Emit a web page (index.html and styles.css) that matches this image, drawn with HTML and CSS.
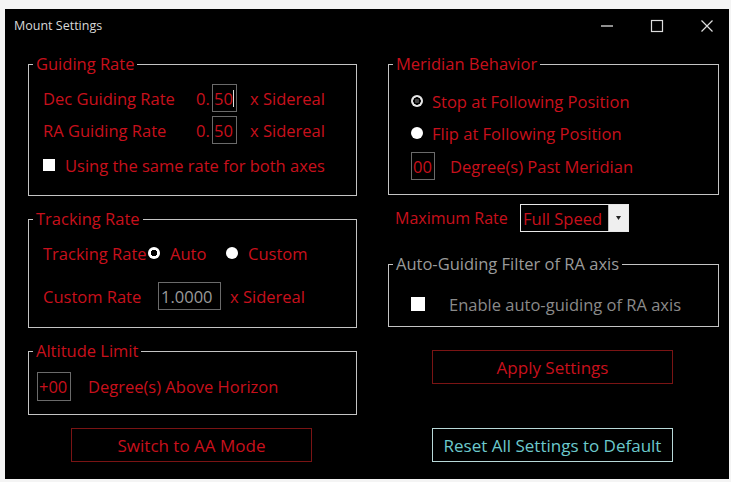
FILE: index.html
```html
<!DOCTYPE html>
<html>
<head>
<meta charset="utf-8">
<link rel="stylesheet" href="styles.css">
</head>
<body>
<div class="window">
  <div class="titlebar">
    <span class="title">Mount Settings</span>
    <div class="controls">
      <svg class="ctl" width="14" height="14" viewBox="0 0 14 14"><line x1="1" y1="7" x2="13" y2="7" stroke="#ddd" stroke-width="1.3"/></svg>
      <svg class="ctl" width="14" height="14" viewBox="0 0 14 14"><rect x="1.5" y="1.5" width="11" height="11" fill="none" stroke="#ddd" stroke-width="1.2"/></svg>
      <svg class="ctl" width="14" height="14" viewBox="0 0 14 14"><path d="M1.5 1.5 L12.5 12.5 M12.5 1.5 L1.5 12.5" stroke="#ddd" stroke-width="1.2"/></svg>
    </div>
  </div>
  <div class="content">
    <div class="col">
      <fieldset class="group g-guiding">
        <legend>Guiding Rate</legend>
        <div class="inner pad-guiding">
          <div class="row r-first">
            <span class="lbl w-guide">Dec Guiding Rate</span>
            <span class="zero">0.</span>
            <span class="tbox w-rate">50<i class="caret"></i></span>
            <span class="unit">x Sidereal</span>
          </div>
          <div class="row">
            <span class="lbl w-guide">RA Guiding Rate</span>
            <span class="zero">0.</span>
            <span class="tbox w-rate">50</span>
            <span class="unit">x Sidereal</span>
          </div>
          <div class="row r-check">
            <span class="check"></span>
            <span class="lbl">Using the same rate for both axes</span>
          </div>
        </div>
      </fieldset>

      <fieldset class="group g-tracking">
        <legend>Tracking Rate</legend>
        <div class="inner pad-tracking">
          <div class="row">
            <span class="lbl w-track">Tracking Rate</span>
            <span class="radio on"></span>
            <span class="lbl w-auto">Auto</span>
            <span class="radio"></span>
            <span class="lbl opt">Custom</span>
          </div>
          <div class="row r-custom">
            <span class="lbl w-custom">Custom Rate</span>
            <span class="tbox w-crate grey">1.0000</span>
            <span class="unit2">x Sidereal</span>
          </div>
        </div>
      </fieldset>

      <fieldset class="group g-alt">
        <legend>Altitude Limit</legend>
        <div class="inner pad-alt">
          <div class="row">
            <span class="tbox w-alt">+00</span>
            <span class="lbl deg">Degree(s) Above Horizon</span>
          </div>
        </div>
      </fieldset>

      <button class="btn btn-red b-switch">Switch to AA Mode</button>
    </div>

    <div class="col">
      <fieldset class="group g-meridian">
        <legend>Meridian Behavior</legend>
        <div class="inner pad-meridian">
          <div class="row">
            <span class="radio on2"></span>
            <span class="lbl opt2">Stop at Following Position</span>
          </div>
          <div class="row r-m2">
            <span class="radio"></span>
            <span class="lbl opt2">Flip at Following Position</span>
          </div>
          <div class="row r-m3">
            <span class="tbox w-mer">00</span>
            <span class="lbl deg2">Degree(s) Past Meridian</span>
          </div>
        </div>
      </fieldset>

      <div class="maxrate">
        <span class="lbl w-max">Maximum Rate</span>
        <div class="select">
          <span class="sel-val">Full Speed</span>
          <span class="sel-btn"><svg width="5" height="4" viewBox="0 0 5 4"><path d="M0 0 H5 L2.5 4 Z" fill="#222"/></svg></span>
        </div>
      </div>

      <fieldset class="group g-auto">
        <legend class="grey-legend">Auto-Guiding Filter of RA axis</legend>
        <div class="inner pad-auto">
          <div class="row">
            <span class="check big"></span>
            <span class="lbl greytext">Enable auto-guiding of RA axis</span>
          </div>
        </div>
      </fieldset>

      <button class="btn btn-red b-apply">Apply Settings</button>
      <button class="btn btn-teal b-reset">Reset All Settings to Default</button>
    </div>
  </div>
</div>
</body>
</html>
```

FILE: styles.css
```css
* { box-sizing: border-box; }
html, body { margin: 0; padding: 0; }
body {
  background: #f4f4f4;
  width: 731px;
  height: 482px;
  padding: 9px 2px 3px 5px;
  font-family: "Open Sans", "Noto Sans", sans-serif;
}
.window {
  background: #000;
  width: 724px;
  height: 470px;
  display: flex;
  flex-direction: column;
}
.titlebar {
  height: 33px;
  display: flex;
  align-items: center;
  justify-content: space-between;
  padding-left: 9px;
  padding-right: 15px;
}
.title {
  color: #d8d8d8;
  font-size: 12.5px;
}
.controls {
  display: flex;
  gap: 36px;
  align-items: center;
}
.ctl { display: block; }

.content {
  display: grid;
  grid-template-columns: 329px 331px;
  column-gap: 31px;
  padding: 13px 0 0 23px;
}
.col {
  display: flex;
  flex-direction: column;
  align-items: flex-start;
}
.group {
  margin: 0;
  padding: 0;
  border: 1px solid #c4c4c4;
  width: 100%;
  min-width: 0;
}
.group legend {
  color: #c8101c;
  font-size: 16.5px;
  line-height: 18px;
  padding: 0 3px;
  margin-left: 4px;
}
.group legend.grey-legend { color: #9a9a9a; }

.g-guiding { height: 141px; }
.g-tracking { height: 118px; margin-top: 14px; }
.g-alt { height: 73px; margin-top: 14px; }
.g-meridian { height: 140px; }
.g-auto { height: 72px; margin-top: 23px; }

.inner { display: flex; flex-direction: column; }
.pad-guiding { padding: 11px 0 0 14px; row-gap: 4px; }
.pad-tracking { padding: 11px 0 0 14px; }
.pad-alt { padding: 12px 0 0 8px; }
.pad-meridian { padding: 14px 0 0 22px; row-gap: 4px; }
.pad-auto { padding: 17px 0 0 22px; }

.row {
  display: flex;
  align-items: center;
  height: 28px;
  font-size: 16.5px;
  color: #c8101c;
  white-space: nowrap;
}
.r-check { margin-top: 3px; }
.r-custom { margin-top: 15px; }
.r-m3 { margin-top: 1px; }

.lbl { display: inline-block; }
.w-guide { width: 153px; }
.zero { width: 16px; }
.tbox {
  height: 28px;
  border: 1px solid #6a6a6a;
  display: inline-flex;
  align-items: center;
  padding-left: 1px;
  color: #c8101c;
  font-size: 16.5px;
  position: relative;
  overflow: hidden;
}
.w-rate { width: 25px; }
.caret {
  position: absolute;
  right: 2px;
  top: 5px;
  width: 1px;
  height: 17px;
  background: #ddd;
}
.unit { margin-left: 13px; }
.check {
  width: 12px;
  height: 12px;
  background: #fff;
  margin-right: 10px;
  flex: none;
}
.check.big { width: 14px; height: 14px; margin-right: 24px; }

.w-track { width: 105px; }
.radio {
  width: 12px;
  height: 12px;
  border-radius: 50%;
  background: #fff;
  flex: none;
  margin-right: 10px;
}
.radio.on {
  background: radial-gradient(circle, #000 0 3px, #fff 3.5px);
}
.radio.on2 {
  background: radial-gradient(circle, #444 0 2px, #000 2.5px 3.5px, #e6e6e6 4px);
}
.w-auto { width: 56px; }
.w-custom { width: 115px; }
.w-crate { width: 63px; padding-left: 2px; }
.grey { color: #9a9a9a; }
.unit2 { margin-left: 9px; }

.w-alt { width: 34px; height: 29px; }
.deg { margin-left: 17px; }

.opt2 { margin-left: -1px; }
.w-mer { width: 24px; }
.deg2 { margin-left: 15px; }

.maxrate {
  display: flex;
  align-items: center;
  height: 28px;
  margin-top: 9px;
  padding-left: 7px;
  font-size: 16px;
  color: #c8101c;
}
.w-max { width: 125px; }
.select {
  display: flex;
  height: 28px;
  border: 1px solid #e8e8e8;
}
.sel-val {
  width: 88px;
  display: flex;
  align-items: center;
  padding-left: 2px;
  font-size: 16.5px;
  color: #c8101c;
  border-right: 1px solid #bbb;
  white-space: nowrap;
  overflow: hidden;
}
.sel-btn {
  width: 19px;
  background: #efefef;
  display: flex;
  align-items: center;
  justify-content: center;
}
.sel-btn svg { display: block; }

.greytext { color: #8a8a8a; }

.btn {
  width: 241px;
  height: 34px;
  background: #000;
  font-family: inherit;
  font-size: 17px;
  padding: 0;
}
.btn-red { border: 1px solid #7a1414; color: #c8101c; }
.btn-teal { border: 1px solid #b8d8d8; color: #6cc9cc; }
.b-switch { margin-top: 13px; margin-left: 43px; }
.b-apply { margin-top: 23px; margin-left: 44px; }
.b-reset { margin-top: 44px; margin-left: 44px; }
```
